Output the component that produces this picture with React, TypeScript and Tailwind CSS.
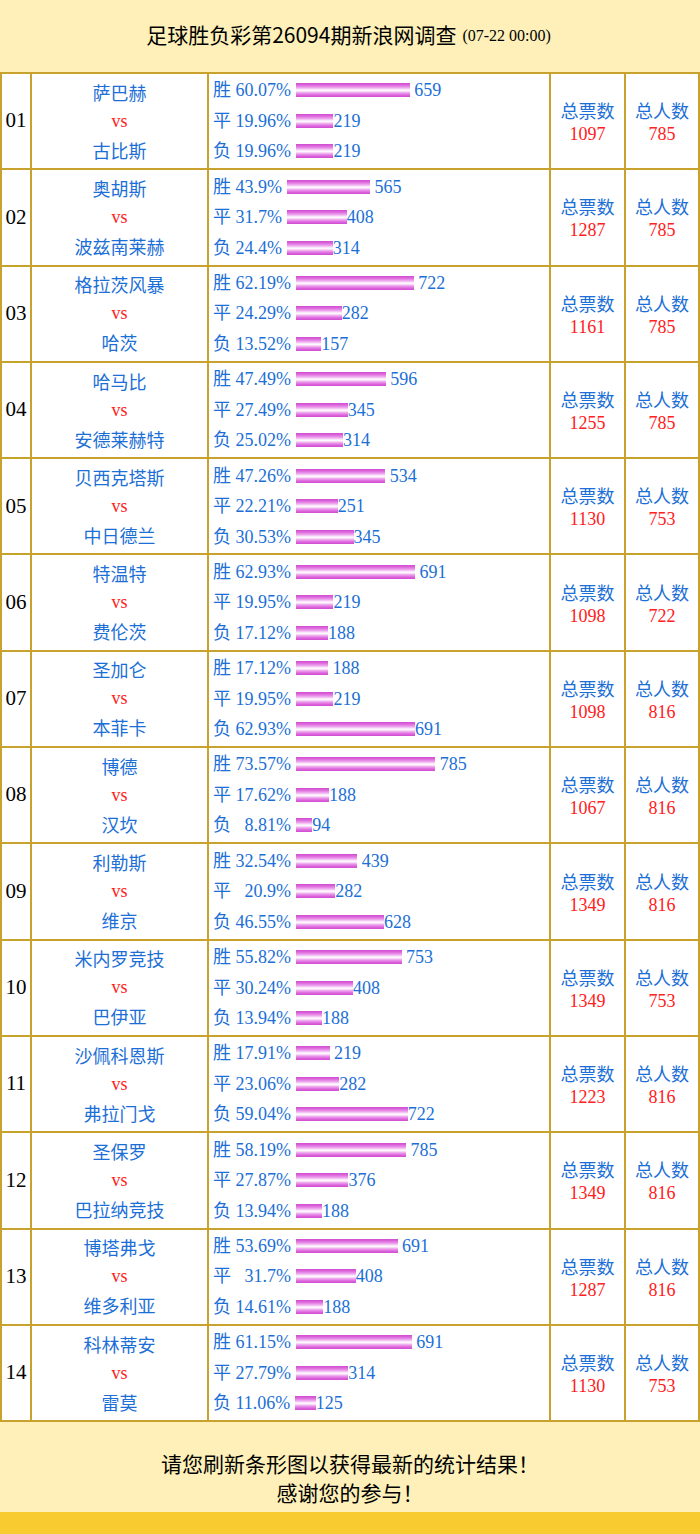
import React from "react";

type Line = { pct: string; n: number; pad?: boolean };
type Row = { no: string; home: string; away: string; lines: [Line, Line, Line]; votes: number; people: number };

const rows: Row[] = [
  { no: "01", home: "萨巴赫", away: "古比斯", lines: [{ pct: "60.07", n: 659 }, { pct: "19.96", n: 219 }, { pct: "19.96", n: 219 }], votes: 1097, people: 785 },
  { no: "02", home: "奥胡斯", away: "波兹南莱赫", lines: [{ pct: "43.9", n: 565 }, { pct: "31.7", n: 408 }, { pct: "24.4", n: 314 }], votes: 1287, people: 785 },
  { no: "03", home: "格拉茨风暴", away: "哈茨", lines: [{ pct: "62.19", n: 722 }, { pct: "24.29", n: 282 }, { pct: "13.52", n: 157 }], votes: 1161, people: 785 },
  { no: "04", home: "哈马比", away: "安德莱赫特", lines: [{ pct: "47.49", n: 596 }, { pct: "27.49", n: 345 }, { pct: "25.02", n: 314 }], votes: 1255, people: 785 },
  { no: "05", home: "贝西克塔斯", away: "中日德兰", lines: [{ pct: "47.26", n: 534 }, { pct: "22.21", n: 251 }, { pct: "30.53", n: 345 }], votes: 1130, people: 753 },
  { no: "06", home: "特温特", away: "费伦茨", lines: [{ pct: "62.93", n: 691 }, { pct: "19.95", n: 219 }, { pct: "17.12", n: 188 }], votes: 1098, people: 722 },
  { no: "07", home: "圣加仑", away: "本菲卡", lines: [{ pct: "17.12", n: 188 }, { pct: "19.95", n: 219 }, { pct: "62.93", n: 691 }], votes: 1098, people: 816 },
  { no: "08", home: "博德", away: "汉坎", lines: [{ pct: "73.57", n: 785 }, { pct: "17.62", n: 188 }, { pct: "8.81", n: 94, pad: true }], votes: 1067, people: 816 },
  { no: "09", home: "利勒斯", away: "维京", lines: [{ pct: "32.54", n: 439 }, { pct: "20.9", n: 282, pad: true }, { pct: "46.55", n: 628 }], votes: 1349, people: 816 },
  { no: "10", home: "米内罗竞技", away: "巴伊亚", lines: [{ pct: "55.82", n: 753 }, { pct: "30.24", n: 408 }, { pct: "13.94", n: 188 }], votes: 1349, people: 753 },
  { no: "11", home: "沙佩科恩斯", away: "弗拉门戈", lines: [{ pct: "17.91", n: 219 }, { pct: "23.06", n: 282 }, { pct: "59.04", n: 722 }], votes: 1223, people: 816 },
  { no: "12", home: "圣保罗", away: "巴拉纳竞技", lines: [{ pct: "58.19", n: 785 }, { pct: "27.87", n: 376 }, { pct: "13.94", n: 188 }], votes: 1349, people: 816 },
  { no: "13", home: "博塔弗戈", away: "维多利亚", lines: [{ pct: "53.69", n: 691 }, { pct: "31.7", n: 408, pad: true }, { pct: "14.61", n: 188 }], votes: 1287, people: 816 },
  { no: "14", home: "科林蒂安", away: "雷莫", lines: [{ pct: "61.15", n: 691 }, { pct: "27.79", n: 314 }, { pct: "11.06", n: 125 }], votes: 1130, people: 753 },
];

const labels = ["胜", "平", "负"];
const serif = "font-['Liberation_Serif','Noto_Sans_CJK_SC',serif]";

function Bar({ pct }: { pct: string }) {
  const w = parseFloat(pct) * 1.9;
  return (
    <span
      className="inline-block h-[14px] align-[-1px] bg-[linear-gradient(to_bottom,#d04ad0_0%,#dc66dc_14%,#eb98eb_30%,#f8dcf8_44%,#ffffff_52%,#f8dcf8_60%,#eb98eb_72%,#dc66dc_86%,#d04ad0_100%)]"
      style={{ width: `${w}px` }}
    />
  );
}

export default function App() {
  return (
    <div className={`w-[700px] ${serif}`}>
      <div className="h-[72px] bg-[#fef0b8] flex items-center justify-center pb-[3px] pr-[3px]">
        <span className="font-['Noto_Sans_CJK_SC',sans-serif] text-[21px] text-black">足球胜负彩第26094期新浪网调查</span>
        <span className="ml-[6px] text-[16px] text-black font-['Liberation_Serif',serif] mt-[2px]">(07-22 00:00)</span>
      </div>
      <div className="bg-[#c9a22e] p-[2px] flex flex-col gap-[2px]">
        {rows.map((r) => (
          <div key={r.no} className="grid grid-cols-[28px_175px_340px_73px_72px] gap-[2px] h-[94.3px] overflow-hidden">
            <div className="bg-white flex items-center justify-center text-[21px] text-black">{r.no}</div>
            <div className="bg-white flex flex-col justify-center items-center text-[18px] overflow-hidden">
              <div className="h-[29px] leading-[29px] text-[#1c6fd6] font-['Noto_Sans_CJK_SC',sans-serif]">{r.home}</div>
              <div className="h-[29px] leading-[29px] text-[#ff2020] font-['Liberation_Serif',serif]">vs</div>
              <div className="h-[29px] leading-[29px] text-[#1c6fd6] font-['Noto_Sans_CJK_SC',sans-serif]">{r.away}</div>
            </div>
            <div className="bg-white flex flex-col justify-center pl-[4px] text-[18px] text-[#1c6fd6] whitespace-pre overflow-hidden">
              {r.lines.map((l, i) => (
                <div key={i} className="h-[30.5px] leading-[30.5px]">
                  <span className="font-['Noto_Sans_CJK_SC',sans-serif] leading-none">{labels[i]}</span>
                  {" "}
                  {l.pad ? "\u00A0\u00A0" : ""}
                  {l.pct}%{" "}
                  <Bar pct={l.pct} />
                  {i === 0 ? " " : ""}
                  {l.n}
                </div>
              ))}
            </div>
            <div className="bg-white flex flex-col items-center justify-center text-[18px]">
              <div className="h-[22px] leading-[22px] text-[#1c6fd6] font-['Noto_Sans_CJK_SC',sans-serif]">总票数</div>
              <div className="h-[22px] leading-[26px] text-[#ff2020]">{r.votes}</div>
            </div>
            <div className="bg-white flex flex-col items-center justify-center text-[18px]">
              <div className="h-[22px] leading-[22px] text-[#1c6fd6] font-['Noto_Sans_CJK_SC',sans-serif]">总人数</div>
              <div className="h-[22px] leading-[26px] text-[#ff2020]">{r.people}</div>
            </div>
          </div>
        ))}
      </div>
      <div className="h-[90px] bg-[#fef0b8] pt-[27px] flex flex-col items-center font-['Noto_Sans_CJK_SC',sans-serif] text-[21px] leading-[29px] text-black">
        <span>请您刷新条形图以获得最新的统计结果！</span>
        <span>感谢您的参与！</span>
      </div>
      <div className="h-[22px] bg-[#f8cc30]" />
    </div>
  );
}
